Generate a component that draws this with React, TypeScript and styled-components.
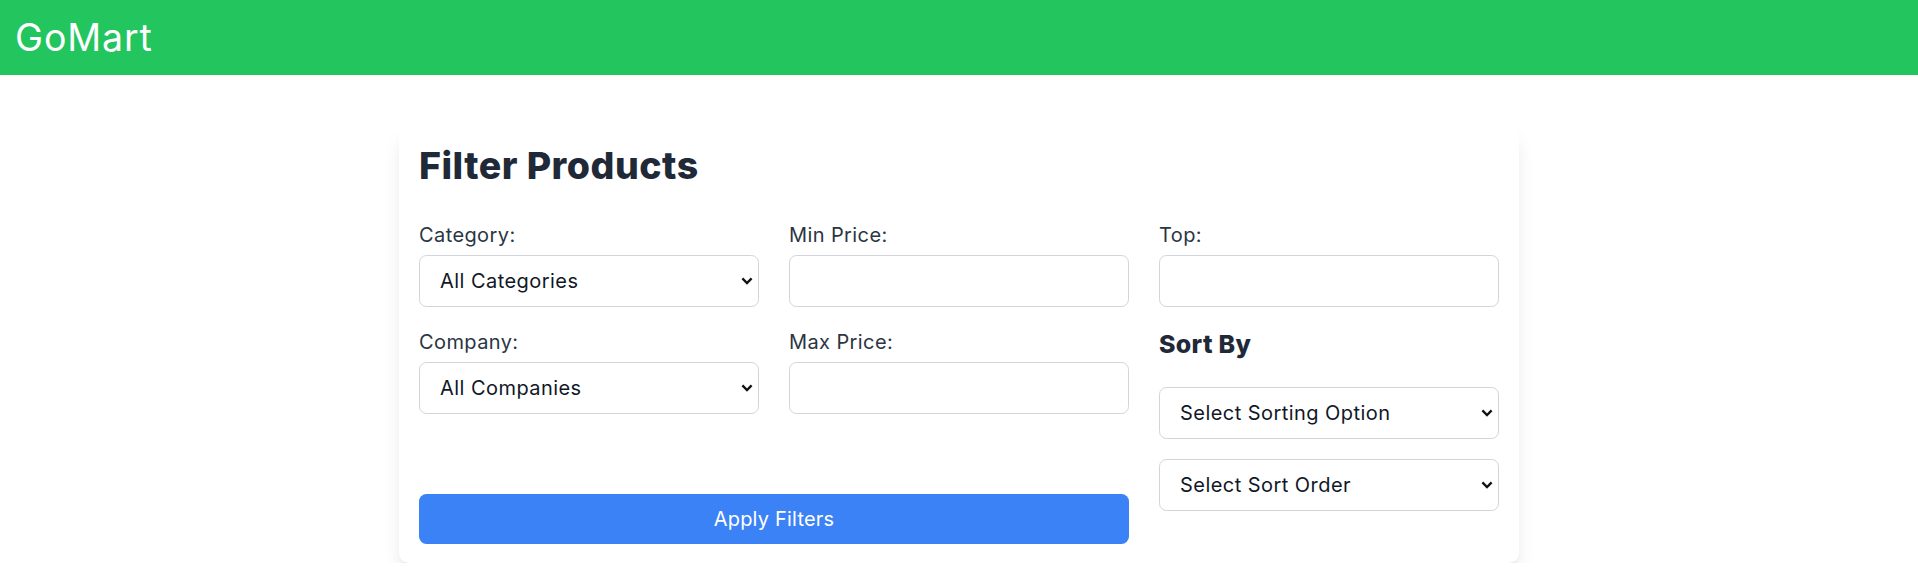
import React from "react";
import styled, { createGlobalStyle } from "styled-components";

const Global = createGlobalStyle`
  html, body {
    margin: 0;
    padding: 0;
    background: #ffffff;
    font-family: Inter, "Open Sans", "Liberation Sans", sans-serif;
  }
  * { box-sizing: border-box; }
`;

const Header = styled.header`
  height: 75px;
  background: #22c55e;
  padding: 15px 15px;
  display: flex;
  align-items: center;
`;

const Brand = styled.h1`
  margin: 0;
  color: #ffffff;
  font-size: 37.5px;
  font-weight: 400;
  line-height: 45px;
  letter-spacing: 0.9px;
`;

const Main = styled.main`
  padding-top: 50px;
`;

const Card = styled.section`
  width: 1120px;
  margin: 0 auto;
  background: #ffffff;
  border-radius: 10px;
  padding: 18px 20px 19px;
  box-shadow: 0 12.5px 18.75px -3.75px rgba(0, 0, 0, 0.1),
    0 5px 7.5px -5px rgba(0, 0, 0, 0.1);
`;

const Title = styled.h2`
  margin: 0 0 32px;
  font-size: 37.5px;
  line-height: 45px;
  font-weight: 800;
  letter-spacing: 0.5px;
  color: #1f2937;
`;

const Body = styled.div`
  display: grid;
  grid-template-columns: repeat(3, 1fr);
  column-gap: 30px;
`;

const LeftArea = styled.div`
  grid-column: span 2;
  display: flex;
  flex-direction: column;
`;

const FieldsGrid = styled.div`
  display: grid;
  grid-template-columns: repeat(2, 1fr);
  column-gap: 30px;
  row-gap: 20px;
`;

const RightArea = styled.div`
  display: flex;
  flex-direction: column;
`;

const Field = styled.div`
  display: flex;
  flex-direction: column;
`;

const Label = styled.label`
  display: block;
  font-size: 20px;
  line-height: 30px;
  color: #2b3544;
  letter-spacing: 0.4px;
  margin-bottom: 5px;
`;

const controlBase = `
  width: 100%;
  height: 52px;
  border: 1px solid #d1d5db;
  border-radius: 7.5px;
  background: #ffffff;
  font-family: Inter, "Open Sans", "Liberation Sans", sans-serif;
  font-size: 20px;
  letter-spacing: 0.45px;
  color: #111827;
  outline: none;
`;

const TextInput = styled.input`
  ${controlBase}
  padding: 0 14px;
`;

const SelectWrap = styled.div`
  position: relative;
  width: 100%;
`;

const Select = styled.select`
  ${controlBase}
  appearance: none;
  -webkit-appearance: none;
  padding: 0 40px 0 20px;
`;

const Chevron = styled.svg`
  position: absolute;
  right: 6px;
  top: 50%;
  transform: translateY(-50%);
  width: 12px;
  height: 8px;
  pointer-events: none;
`;

const SortHeading = styled.h3`
  margin: 20px 0 25px;
  font-size: 25px;
  line-height: 35px;
  font-weight: 800;
  letter-spacing: 0.3px;
  color: #1f2937;
`;

const SortStack = styled.div`
  display: flex;
  flex-direction: column;
  gap: 20px;
`;

const ApplyButton = styled.button`
  margin-top: 80px;
  width: 100%;
  height: 50px;
  border: none;
  border-radius: 7.5px;
  background: #3b82f6;
  color: #ffffff;
  font-family: Inter, "Open Sans", "Liberation Sans", sans-serif;
  font-size: 20px;
  letter-spacing: 0.2px;
  cursor: pointer;
`;

function DropDown({ options }: { options: string[] }) {
  return (
    <SelectWrap>
      <Select defaultValue={options[0]}>
        {options.map((o) => (
          <option key={o} value={o}>
            {o}
          </option>
        ))}
      </Select>
      <Chevron viewBox="0 0 12 8" fill="none">
        <path
          d="M1.4 1.4 L6 6 L10.6 1.4"
          stroke="#111111"
          strokeWidth="2.3"
          strokeLinecap="butt"
          strokeLinejoin="miter"
        />
      </Chevron>
    </SelectWrap>
  );
}

export default function App() {
  return (
    <>
      <Global />
      <Header>
        <Brand>GoMart</Brand>
      </Header>
      <Main>
        <Card>
          <Title>Filter Products</Title>
          <Body>
            <LeftArea>
              <FieldsGrid>
                <Field>
                  <Label>Category:</Label>
                  <DropDown options={["All Categories"]} />
                </Field>
                <Field>
                  <Label>Min Price:</Label>
                  <TextInput type="number" />
                </Field>
                <Field>
                  <Label>Company:</Label>
                  <DropDown options={["All Companies"]} />
                </Field>
                <Field>
                  <Label>Max Price:</Label>
                  <TextInput type="number" />
                </Field>
              </FieldsGrid>
              <ApplyButton>Apply Filters</ApplyButton>
            </LeftArea>
            <RightArea>
              <Field>
                <Label>Top:</Label>
                <TextInput type="number" />
              </Field>
              <SortHeading>Sort By</SortHeading>
              <SortStack>
                <DropDown options={["Select Sorting Option"]} />
                <DropDown options={["Select Sort Order"]} />
              </SortStack>
            </RightArea>
          </Body>
        </Card>
      </Main>
    </>
  );
}
